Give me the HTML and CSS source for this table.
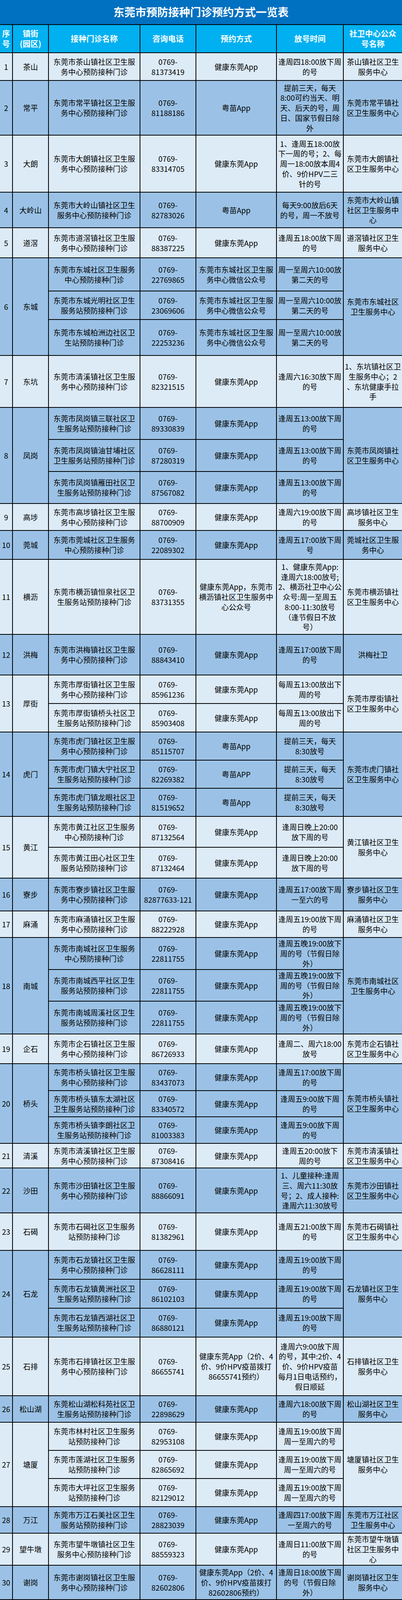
FILE: index.html
```html
<!DOCTYPE html>
<html lang="zh-CN">
<head>
<meta charset="utf-8">
<title>东莞市预防接种门诊预约方式一览表</title>
<link rel="stylesheet" href="styles.css">
</head>
<body>
<div class="page">
<div class="sheet">
<div class="title">东莞市预防接种门诊预约方式一览表</div>

<div class="grp head">
<div class="n">序<br>号</div><div>镇街<br>(园区)</div><div>接种门诊名称</div><div>咨询电话</div><div>预约方式</div><div>放号时间</div><div class="c">社卫中心公众<br>号名称</div>
</div>

<div class="grp light">
<div class="n">1</div><div>茶山</div><div>东莞市茶山镇社区卫生服<br>务中心预防接种门诊</div><div>0769-<br>81373419</div><div>健康东莞App</div><div>逢周四18:00放下周<br>的号</div><div class="c">茶山镇社区卫生<br>服务中心</div>
</div>

<div class="grp dark">
<div class="n">2</div><div>常平</div><div>东莞市常平镇社区卫生服<br>务中心预防接种门诊</div><div>0769-<br>81188186</div><div>粤苗App</div><div>提前三天，每天<br>8:00可约当天、明<br>天、后天的号，周<br>日、国家节假日除<br>外</div><div class="c">东莞市常平镇社<br>区卫生服务中心</div>
</div>

<div class="grp light">
<div class="n">3</div><div>大朗</div><div>东莞市大朗镇社区卫生服<br>务中心预防接种门诊</div><div>0769-<br>83314705</div><div>健康东莞App</div><div>1、逢周五18:00放<br>下一周的号；2、每<br>周一18:00放本周4<br>价、9价HPV二三<br>针的号</div><div class="c">东莞市大朗镇社<br>区卫生服务中心</div>
</div>

<div class="grp dark">
<div class="n">4</div><div>大岭山</div><div>东莞市大岭山镇社区卫生<br>服务中心预防接种门诊</div><div>0769-<br>82783026</div><div>粤苗App</div><div>每天9:00放后6天<br>的号，周一不放号</div><div class="c">东莞市大岭山镇<br>社区卫生服务中<br>心</div>
</div>

<div class="grp light">
<div class="n">5</div><div>道滘</div><div>东莞市道滘镇社区卫生服<br>务中心预防接种门诊</div><div>0769-<br>88387225</div><div>健康东莞App</div><div>逢周五18:00放下周<br>的号</div><div class="c">道滘镇社区卫生<br>服务中心</div>
</div>

<div class="grp dark">
<div class="n s3">6</div><div class="s3">东城</div><div>东莞市东城社区卫生服务<br>中心预防接种门诊</div><div>0769-<br>22769865</div><div>东莞市东城社区卫生服<br>务中心微信公众号</div><div>周一至周六10:00放<br>第二天的号</div><div class="c s3">东莞市东城社区<br>卫生服务中心</div>
<div>东莞市东城光明社区卫生<br>服务站预防接种门诊</div><div>0769-<br>23069606</div><div>东莞市东城社区卫生服<br>务中心微信公众号</div><div>周一至周六10:00放<br>第二天的号</div>
<div>东莞市东城柏洲边社区卫<br>生站预防接种门诊</div><div>0769-<br>22253236</div><div>东莞市东城社区卫生服<br>务中心微信公众号</div><div>周一至周六10:00放<br>第二天的号</div>
</div>

<div class="grp light">
<div class="n">7</div><div>东坑</div><div>东莞市清溪镇社区卫生服<br>务中心预防接种门诊</div><div>0769-<br>82321515</div><div>健康东莞App</div><div>逢周六16:30放下周<br>的号</div><div class="c">1、东坑镇社区卫<br>生服务中心；2<br>、东坑健康手拉<br>手</div>
</div>

<div class="grp dark">
<div class="n s3">8</div><div class="s3">凤岗</div><div>东莞市凤岗镇三联社区卫<br>生服务站预防接种门诊</div><div>0769-<br>89330839</div><div>健康东莞App</div><div>逢周五13:00放下周<br>的号</div><div class="c s3">东莞市凤岗镇社<br>区卫生服务中心</div>
<div>东莞市凤岗镇油甘埔社区<br>卫生服务站预防接种门诊</div><div>0769-<br>87280319</div><div>健康东莞App</div><div>逢周五13:00放下周<br>的号</div>
<div>东莞市凤岗镇雁田社区卫<br>生服务站预防接种门诊</div><div>0769-<br>87567082</div><div>健康东莞App</div><div>逢周五13:00放下周<br>的号</div>
</div>

<div class="grp light">
<div class="n">9</div><div>高埗</div><div>东莞市高埗镇社区卫生服<br>务中心预防接种门诊</div><div>0769-<br>88700909</div><div>健康东莞App</div><div>逢周六19:00放下周<br>的号</div><div class="c">高埗镇社区卫生<br>服务中心</div>
</div>

<div class="grp dark">
<div class="n">10</div><div>莞城</div><div>东莞市莞城社区卫生服务<br>中心预防接种门诊</div><div>0769-<br>22089302</div><div>健康东莞App</div><div>逢周五17:00放下周<br>号</div><div class="c">莞城社区卫生服<br>务中心</div>
</div>

<div class="grp light">
<div class="n">11</div><div>横沥</div><div>东莞市横沥镇恒泉社区卫<br>生服务站预防接种门诊</div><div>0769-<br>83731355</div><div>健康东莞App，东莞市<br>横沥镇社区卫生服务中<br>心公众号</div><div>1、健康东莞App:<br>逢周六18:00放号;<br>2、横沥社卫中心公<br>众号:周一至周五<br>8:00-11:30放号<br>（逢节假日不放<br>号）</div><div class="c">东莞市横沥镇社<br>区卫生服务中心</div>
</div>

<div class="grp dark">
<div class="n">12</div><div>洪梅</div><div>东莞市洪梅镇社区卫生服<br>务中心预防接种门诊</div><div>0769-<br>88843410</div><div>健康东莞App</div><div>逢周五17:00放下周<br>的号</div><div class="c">洪梅社卫</div>
</div>

<div class="grp light">
<div class="n s2">13</div><div class="s2">厚街</div><div>东莞市厚街镇社区卫生服<br>务中心预防接种门诊</div><div>0769-<br>85961236</div><div>健康东莞App</div><div>每周五13:00放出下<br>周的号</div><div class="c s2">东莞市厚街镇社<br>区卫生服务中心</div>
<div>东莞市厚街镇桥头社区卫<br>生服务站预防接种门诊</div><div>0769-<br>85903408</div><div>健康东莞App</div><div>每周五13:00放出下<br>周的号</div>
</div>

<div class="grp dark">
<div class="n s3">14</div><div class="s3">虎门</div><div>东莞市虎门镇社区卫生服<br>务中心预防接种门诊</div><div>0769-<br>85115707</div><div>粤苗App</div><div>提前三天，每天<br>8:30放号</div><div class="c s3">东莞市虎门镇社<br>区卫生服务中心</div>
<div>东莞市虎门镇大宁社区卫<br>生服务站预防接种门诊</div><div>0769-<br>82269382</div><div>粤苗APP</div><div>提前三天，每天<br>8:30放号</div>
<div>东莞市虎门镇龙眼社区卫<br>生服务站预防接种门诊</div><div>0769-<br>81519652</div><div>粤苗App</div><div>提前三天，每天<br>8:30放号</div>
</div>

<div class="grp light">
<div class="n s2">15</div><div class="s2">黄江</div><div>东莞市黄江社区卫生服务<br>中心预防接种门诊</div><div>0769-<br>87132564</div><div>健康东莞App</div><div>逢周日晚上20:00<br>放下周的号</div><div class="c s2">黄江镇社区卫生<br>服务中心</div>
<div>东莞市黄江田心社区卫生<br>服务站预防接种门诊</div><div>0769-<br>87132464</div><div>健康东莞App</div><div>逢周日晚上20:00<br>放下周的号</div>
</div>

<div class="grp dark">
<div class="n">16</div><div>寮步</div><div>东莞市寮步镇社区卫生服<br>务中心预防接种门诊</div><div>0769-<br>82877633-121</div><div>健康东莞App</div><div>逢周五17:00放下周<br>一至六的号</div><div class="c">寮步镇社区卫生<br>服务中心</div>
</div>

<div class="grp light">
<div class="n">17</div><div>麻涌</div><div>东莞市麻涌镇社区卫生服<br>务中心预防接种门诊</div><div>0769-<br>88222928</div><div>健康东莞App</div><div>逢周五19:00放下周<br>的号</div><div class="c">麻涌镇社区卫生<br>服务中心</div>
</div>

<div class="grp dark">
<div class="n s3">18</div><div class="s3">南城</div><div>东莞市南城社区卫生服务<br>中心预防接种门诊</div><div>0769-<br>22811755</div><div>健康东莞App</div><div>逢周五晚19:00放下<br>周的号（节假日除<br>外）</div><div class="c s3">东莞市南城社区<br>卫生服务中心</div>
<div>东莞市南城西平社区卫生<br>服务站预防接种门诊</div><div>0769-<br>22811755</div><div>健康东莞App</div><div>逢周五晚19:00放下<br>周的号（节假日除<br>外）</div>
<div>东莞市南城周溪社区卫生<br>服务站预防接种门诊</div><div>0769-<br>22811755</div><div>健康东莞App</div><div>逢周五晚19:00放下<br>周的号（节假日除<br>外）</div>
</div>

<div class="grp light">
<div class="n">19</div><div>企石</div><div>东莞市企石镇社区卫生服<br>务中心预防接种门诊</div><div>0769-<br>86726933</div><div>健康东莞App</div><div>逢周二、周六18:00<br>放号</div><div class="c">东莞市企石镇社<br>区卫生服务中心</div>
</div>

<div class="grp dark">
<div class="n s3">20</div><div class="s3">桥头</div><div>东莞市桥头镇社区卫生服<br>务中心预防接种门诊</div><div>0769-<br>83437073</div><div>健康东莞App</div><div>逢周五17:00放下周<br>的号</div><div class="c s3">东莞市桥头镇社<br>区卫生服务中心</div>
<div>东莞市桥头镇东太湖社区<br>卫生服务站预防接种门诊</div><div>0769-<br>83340572</div><div>健康东莞App</div><div>逢周五9:00放下周<br>的号</div>
<div>东莞市桥头镇李朗社区卫<br>生服务站预防接种门诊</div><div>0769-<br>81003383</div><div>健康东莞App</div><div>逢周五9:00放下周<br>的号</div>
</div>

<div class="grp light">
<div class="n">21</div><div>清溪</div><div>东莞市清溪镇社区卫生服<br>务中心预防接种门诊</div><div>0769-<br>87308416</div><div>健康东莞App</div><div>逢周五20:00放下<br>周的号</div><div class="c">东莞市清溪镇社<br>区卫生服务中心</div>
</div>

<div class="grp dark">
<div class="n">22</div><div>沙田</div><div>东莞市沙田镇社区卫生服<br>务中心预防接种门诊</div><div>0769-<br>88866091</div><div>健康东莞App</div><div>1、儿童接种:逢周<br>三、周六11:30放<br>号；2、成人接种:<br>逢周六11:30放号</div><div class="c">东莞市沙田镇社<br>区卫生服务中心</div>
</div>

<div class="grp light">
<div class="n">23</div><div>石碣</div><div>东莞市石碣社区卫生服务<br>站预防接种门诊</div><div>0769-<br>81382961</div><div>健康东莞App</div><div>逢周五21:00放下周<br>的号</div><div class="c">东莞市石碣镇社<br>区卫生服务中心</div>
</div>

<div class="grp dark">
<div class="n s3">24</div><div class="s3">石龙</div><div>东莞市石龙镇社区卫生服<br>务中心预防接种门诊</div><div>0769-<br>86628111</div><div>健康东莞App</div><div>逢周五19:00放下周<br>的号</div><div class="c s3">石龙镇社区卫生<br>服务中心</div>
<div>东莞市石龙镇黄洲社区卫<br>生服务站预防接种门诊</div><div>0769-<br>86102103</div><div>健康东莞App</div><div>逢周五19:00放下周<br>的号</div>
<div>东莞市石龙镇西湖社区卫<br>生服务站预防接种门诊</div><div>0769-<br>86880121</div><div>健康东莞App</div><div>逢周五19:00放下周<br>的号</div>
</div>

<div class="grp light">
<div class="n">25</div><div>石排</div><div>东莞市石排镇社区卫生服<br>务中心预防接种门诊</div><div>0769-<br>86655741</div><div>健康东莞App（2价、4<br>价、9价HPV疫苗拨打<br>86655741预约）</div><div>逢周六9:00放下周<br>的号，其中:2价、4<br>价、9价HPV疫苗<br>每月1日电话预约，<br>假日顺延</div><div class="c">石排镇社区卫生<br>服务中心</div>
</div>

<div class="grp dark">
<div class="n">26</div><div>松山湖</div><div>东莞松山湖松科苑社区卫<br>生服务站预防接种门诊</div><div>0769-<br>22898629</div><div>健康东莞App</div><div>逢周六18:00放下周<br>的号</div><div class="c">松山湖社区卫生<br>服务中心</div>
</div>

<div class="grp light">
<div class="n s3">27</div><div class="s3">塘厦</div><div>东莞市林村社区卫生服务<br>站预防接种门诊</div><div>0769-<br>82953108</div><div>健康东莞App</div><div>逢周五19:00放下周<br>周一至周六的号</div><div class="c s3">塘厦镇社区卫生<br>服务中心</div>
<div>东莞市莲湖社区卫生服务<br>站预防接种门诊</div><div>0769-<br>82865692</div><div>健康东莞App</div><div>逢周五19:00放下周<br>周一至周六的号</div>
<div>东莞市大坪社区卫生服务<br>站预防接种门诊</div><div>0769-<br>82129012</div><div>健康东莞App</div><div>逢周五19:00放下周<br>周一至周六的号</div>
</div>

<div class="grp dark">
<div class="n">28</div><div>万江</div><div>东莞市万江石美社区卫生<br>服务站预防接种门诊</div><div>0769-<br>28823039</div><div>健康东莞App</div><div>逢周四17:00放下周<br>一至周六的号</div><div class="c">东莞市万江社区<br>卫生服务中心</div>
</div>

<div class="grp light">
<div class="n">29</div><div>望牛墩</div><div>东莞市望牛墩镇社区卫生<br>服务中心预防接种门诊</div><div>0769-<br>88559323</div><div>健康东莞App</div><div>逢周日11:00放下周<br>的号</div><div class="c">东莞市望牛墩镇<br>社区卫生服务中<br>心</div>
</div>

<div class="grp dark">
<div class="n">30</div><div>谢岗</div><div>东莞市谢岗镇社区卫生服<br>务中心预防接种门诊</div><div>0769-<br>82602806</div><div>健康东莞App（2价、4<br>价、9价HPV疫苗拨打<br>82602806预约）</div><div>逢周日18:00放下周<br>的号（节假日除<br>外）</div><div class="c">谢岗镇社区卫生<br>服务中心</div>
</div>

<div class="grp light">
<div class="n s2">31</div><div class="s2">樟木头</div><div>东莞市樟木头镇社区卫生<br>服务中心预防接种门诊</div><div>0769-<br>87700300</div><div>健康东莞App</div><div>逢周五18:00放下周<br>的号</div><div class="c s2">樟木头镇社区卫<br>生服务中心</div>
<div>东莞市樟木头镇官仓社区<br>卫生服务站预防接种门诊</div><div>0769-<br>82696456</div><div>健康东莞App</div><div>逢周五18:00放下周<br>的号</div>
</div>

<div class="grp dark">
<div class="n s2">32</div><div class="s2">长安</div><div>东莞市长安镇社区卫生服<br>务中心预防接种门诊</div><div>0769-<br>82381336</div><div>健康东莞App</div><div>逢周五9:00放下周<br>的号</div><div class="c s2">东莞市长安镇社<br>区卫生服务中心</div>
<div>东莞市长安镇沙头第一社<br>区卫生服务站预防接种门<br>诊</div><div>0769-<br>82381336</div><div>健康东莞App</div><div>逢周五9:00放下周<br>的号</div>
</div>

<div class="grp light last">
<div class="n">33</div><div>中堂</div><div>东莞市中堂镇潢涌社区卫<br>生服务站</div><div>0769-<br>81163006</div><div>粤苗App</div><div>每天9:00放号，周<br>五不放号，周日和<br>节假日休息</div><div class="c">中堂镇社区卫生<br>服务中心</div>
</div>
</div>
<div class="watermark">易坊好文馆</div>
</div>
</body>
</html>
```

FILE: styles.css
```css
html, body {
  margin: 0;
  padding: 0;
  background: #ffffff;
}

.page {
  position: relative;
  width: 1028px;
  height: 4533px;
  overflow: hidden;
}

.sheet {
  display: grid;
  grid-template-columns: 33px 92px 234px 143px 206px 171px 149px;
  grid-template-rows:
    64px 72px 71px 140px 146px 91px 77px 85px 73px 92px
    133px 82px 82px 82px 69px 74px 192px 104px 73px 73px
    72px 72px 72px 79px 79px 84px 68px 82px 81px 84px
    76px 69px 67px 68px 63px 115px 96px 74px 74px 74px
    150px 68px 72px 72px 72px 68px 82px 88px 88px 88px
    89px 82px 89px;
  width: 1028px;
  font-family: "Noto Sans CJK SC", "Noto Sans", sans-serif;
  font-size: 19px;
  line-height: 25.8px;
  color: #000000;
}

.title {
  grid-column: 1 / -1;
  display: flex;
  align-items: center;
  justify-content: center;
  background: #0070c0;
  color: #ffffff;
  font-size: 28px;
  font-weight: 700;
  border-bottom: 2px solid #000000;
  box-sizing: border-box;
}

.grp {
  display: contents;
}

.grp > div {
  box-sizing: border-box;
  display: flex;
  align-items: center;
  justify-content: center;
  text-align: center;
  white-space: nowrap;
  padding: 0 1px;
  border-right: 2px solid #000000;
  border-bottom: 2px solid #000000;
  min-width: 0;
}

.grp > .c {
  border-right: none;
}

.s2 { grid-row: span 2; }
.s3 { grid-row: span 3; }

.head > div {
  background: #00b0f0;
  color: #ffffff;
  font-size: 20px;
  font-weight: 700;
  line-height: 26px;
}

.light > div { background: #ddebf7; }
.dark > div { background: #9bc2e6; }

.last > div {
  border-bottom: 1px solid #000000;
}

.watermark {
  position: absolute;
  left: 882px;
  top: 4484px;
  font-family: "Noto Sans CJK SC", sans-serif;
  font-size: 23px;
  font-weight: 500;
  line-height: 30px;
  color: #ffffff;
  text-shadow: 1px 0 0 #6a6a6a, -1px 0 0 #6a6a6a, 0 1px 0 #6a6a6a, 0 -1px 0 #6a6a6a, 1px 1px 2px rgba(0, 0, 0, 0.45);
  white-space: nowrap;
}
```
